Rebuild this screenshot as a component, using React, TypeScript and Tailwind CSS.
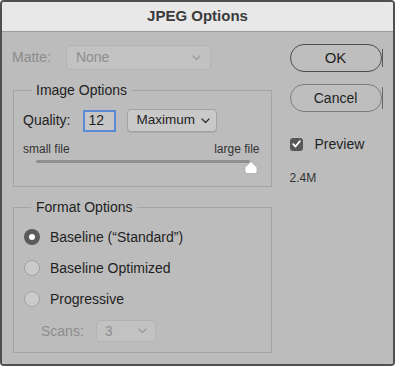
import React from 'react';

function Chevron({ color = '#333' }: { color?: string }) {
  return (
    <svg width="9" height="6" viewBox="0 0 9 6" fill="none">
      <polyline points="1,1 4.5,4.5 8,1" stroke={color} strokeWidth="1.3" strokeLinecap="round" strokeLinejoin="round" />
    </svg>
  );
}

function Radio({ checked, label }: { checked?: boolean; label: string }) {
  return (
    <div className="flex items-center h-[20px]">
      {checked ? (
        <span className="w-[16px] h-[16px] rounded-full bg-[#5b5b5b] flex items-center justify-center">
          <span className="w-[6px] h-[6px] rounded-full bg-white" />
        </span>
      ) : (
        <span className="w-[16px] h-[16px] rounded-full bg-[#cbcbcb] border border-[#a3a3a3]" />
      )}
      <span className="ml-[10px] text-[14px] text-[#1f1f1f]">{label}</span>
    </div>
  );
}

export default function App() {
  return (
    <div className="w-[400px] h-[372px] bg-white" style={{ fontFamily: '"Liberation Sans", Arial, sans-serif' }}>
      <div className="w-[395px] h-[366px] border-2 border-[#4f4f4f] rounded-[4px] overflow-hidden flex flex-col">
        {/* Title bar */}
        <div className="h-[30px] bg-[#e8e8e8] border-b border-[#9c9c9c] flex items-center justify-center">
          <span className="text-[15px] font-bold text-[#3a3a3a]">JPEG Options</span>
        </div>

        {/* Body */}
        <div className="flex-1 bg-[#bcbcbc] flex px-[11px]">
          {/* Left column */}
          <div className="w-[260px] pt-[13px]">
            {/* Matte */}
            <div className="flex items-center h-[25px]">
              <span className="text-[14px] text-[#8c8c8c] ml-[-1px]">Matte:</span>
              <div className="ml-[15px] w-[145px] h-[25px] rounded-[4px] bg-[#c2c2c2] border border-[#b3b3b3] flex items-center justify-between px-[9px]">
                <span className="text-[14px] text-[#8e8e8e]">None</span>
                <Chevron color="#9a9a9a" />
              </div>
            </div>

            {/* Image Options */}
            <div className="mt-[20px] border border-[#a4a4a4] h-[97px]">
              <div className="-mt-[9px] ml-[17px] px-[5px] w-fit bg-[#bcbcbc] text-[14px] leading-[17px] text-[#1f1f1f]">Image Options</div>
              <div className="mt-[10px] flex items-center h-[23px] pl-[9px]">
                <span className="text-[14px] text-[#1f1f1f]">Quality:</span>
                <div className="ml-[13px] w-[33px] h-[22px] border-2 border-[#5a8ad6] bg-[#c6c6c6] flex items-center pl-[3px]">
                  <span className="text-[14px] text-[#1f1f1f]">12</span>
                </div>
                <div className="ml-[11px] w-[90px] h-[23px] rounded-[4px] bg-[#c9c9c9] border border-[#a2a2a2] shadow-[0_1px_0_#aaa] flex items-center justify-between pl-[8px] pr-[6px]">
                  <span className="text-[13.5px] text-[#1f1f1f]">Maximum</span>
                  <Chevron />
                </div>
              </div>
              <div className="mt-[10px] flex justify-between px-[9px] text-[12px] leading-[14px] text-[#333]">
                <span>small file</span>
                <span className="mr-[2px]">large file</span>
              </div>
              <div className="relative mt-[4px] ml-[22px] w-[214px] h-[3px] bg-[#8f8f8f] rounded-full">
                <svg className="absolute right-[-8px] top-[1px]" width="14" height="13" viewBox="0 0 14 13">
                  <path d="M7 0.5 L13 6.5 L13 10.5 Q13 12.5 11 12.5 L3 12.5 Q1 12.5 1 10.5 L1 6.5 Z" fill="#ffffff" stroke="#9a9a9a" strokeWidth="0.6" />
                </svg>
              </div>
            </div>

            {/* Format Options */}
            <div className="mt-[20px] border border-[#a4a4a4] h-[146px]">
              <div className="-mt-[9px] ml-[17px] px-[5px] w-fit bg-[#bcbcbc] text-[14px] leading-[17px] text-[#1f1f1f]">Format Options</div>
              <div className="mt-[11px] pl-[10px] flex flex-col gap-[11px]">
                <Radio checked label={'Baseline (\u201CStandard\u201D)'} />
                <Radio label="Baseline Optimized" />
                <Radio label="Progressive" />
              </div>
              <div className="mt-[11px] flex items-center h-[22px] pl-[27px]">
                <span className="text-[14px] text-[#8c8c8c]">Scans:</span>
                <div className="ml-[12px] w-[60px] h-[22px] rounded-[4px] bg-[#c2c2c2] border border-[#b3b3b3] flex items-center justify-between px-[8px]">
                  <span className="text-[14px] text-[#8e8e8e]">3</span>
                  <Chevron color="#9a9a9a" />
                </div>
              </div>
            </div>
          </div>

          {/* Right column */}
          <div className="ml-[18px] w-[93px] pt-[12px] flex flex-col">
            <div className="relative">
              <button className="w-[92px] h-[28px] rounded-full border border-[#4d4d4d] bg-[#bebebe] text-[15px] text-[#1f1f1f]">OK</button>
              <span className="absolute right-[-1px] top-[5px] bottom-[5px] w-px bg-[#5a5a5a]" />
            </div>
            <div className="relative mt-[12px]">
              <button className="w-[92px] h-[28px] rounded-full border border-[#7d7d7d] bg-[#bebebe] text-[14px] text-[#1f1f1f]">Cancel</button>
              <span className="absolute right-[-1px] top-[3px] bottom-[3px] w-px bg-[#6a6a6a]" />
            </div>
            <div className="mt-[24px] flex items-center h-[16px]">
              <span className="w-[13px] h-[13px] rounded-[3px] bg-[#585858] flex items-center justify-center">
                <svg width="9" height="8" viewBox="0 0 9 8" fill="none">
                  <polyline points="1.2,4.2 3.5,6.5 7.8,1.2" stroke="#ffffff" strokeWidth="1.8" strokeLinecap="round" strokeLinejoin="round" />
                </svg>
              </span>
              <span className="ml-[12px] text-[14px] text-[#1f1f1f]">Preview</span>
            </div>
            <div className="mt-[19px] text-[12px] leading-[14px] text-[#333]">2.4M</div>
          </div>
        </div>
      </div>
    </div>
  );
}
